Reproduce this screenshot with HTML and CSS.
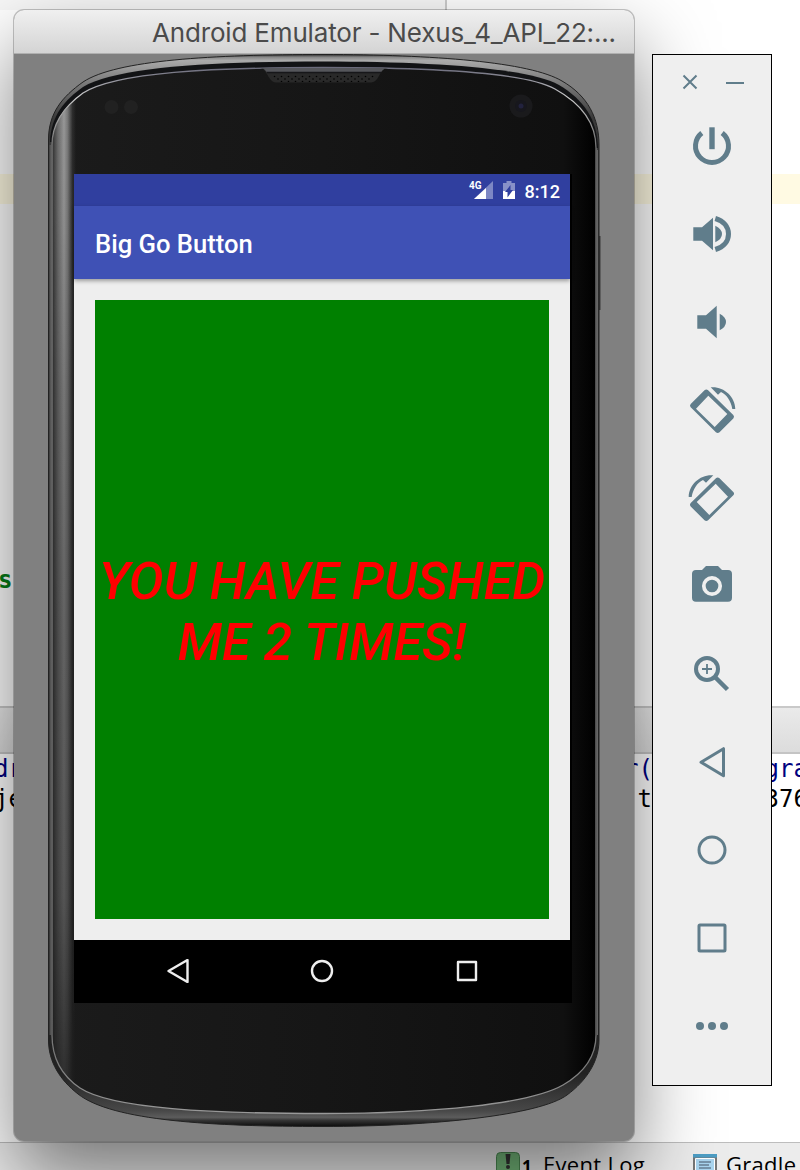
FILE: index.html
```html
<!DOCTYPE html>
<html lang="en">
<head>
<meta charset="utf-8">
<title>Android Emulator</title>
<link rel="stylesheet" href="styles.css">
</head>
<body>
<div class="desktop">
  <div class="ide">
    <div class="ide-top"></div>
    <div class="ide-editor"><div class="caret-line"></div><span class="code keyword">s</span></div>
    <div class="ide-divider"></div>
    <div class="ide-console">
      <div class="log-row blue"><span>dr</span><span>r(</span><span>gra</span></div>
      <div class="log-row"><span>je</span><span class="log-t">t</span><span>376</span></div>
    </div>
    <div class="ide-status">
      <svg class="event-icon" viewBox="0 0 24 24"><rect x=".5" y=".5" width="23" height="22" rx="4" fill="#74b87a" stroke="#4c8a53"/><path d="M9.500 2h5l-1 10h-3z" fill="#333"/><circle cx="12" cy="15" r="2" fill="#333"/></svg>
      <span class="count">1</span>
      <span class="status-label">Event Log</span>
      <svg class="gradle-icon" viewBox="0 0 24 24"><path fill="#777" d="M0 0h24v24H0z"/><path fill="#a9d4ee" stroke="#fff" d="M2.500 4.500h19V25h-19z"/><path fill="#4c9dc4" d="M0 0h24v3.500H0z"/><path d="M6 8h12M6 11h10M6 14h12M6 17h8" stroke="#456" /></svg>
      <span class="status-label">Gradle</span>
    </div>
  </div>

  <div class="window">
    <div class="titlebar"><span>Android Emulator - Nexus_4_API_22:...</span></div>
    <div class="stage">
      <svg class="phone" viewBox="14 54 620 1087">
        <defs>
          <linearGradient id="rim" x1="0" y1="54" x2="0" y2="1127" gradientUnits="userSpaceOnUse">
            <stop offset="0" stop-color="#222"/><stop offset=".003" stop-color="#888"/><stop offset=".006" stop-color="#aaa"/><stop offset=".02" stop-color="#888"/><stop offset=".06" stop-color="#3a3a3a"/><stop offset=".95" stop-color="#222"/><stop offset=".985" stop-color="#484848"/><stop offset=".991" stop-color="#5c5c5c"/><stop offset=".994" stop-color="#333"/><stop offset="1" stop-color="#080808"/>
          </linearGradient>
          <linearGradient id="face" x1="52" y1="0" x2="596" y2="0" gradientUnits="userSpaceOnUse">
            <stop offset="0" stop-color="#1b1b1b"/><stop offset=".5" stop-color="#161616"/><stop offset=".94" stop-color="#101010"/><stop offset="1" stop-color="#000"/>
          </linearGradient>
          <linearGradient id="sheen" x1="52" y1="0" x2="76" y2="0" gradientUnits="userSpaceOnUse">
            <stop offset="0" stop-color="#999" stop-opacity=".15"/><stop offset=".25" stop-color="#999" stop-opacity=".65"/><stop offset=".5" stop-color="#999"/><stop offset=".65" stop-color="#999" stop-opacity=".75"/><stop offset=".85" stop-color="#999" stop-opacity=".15"/><stop offset="1" stop-color="#999" stop-opacity="0"/>
          </linearGradient>
          <linearGradient id="fade" x1="0" y1="90" x2="0" y2="1100" gradientUnits="userSpaceOnUse">
            <stop offset="0" stop-color="#fff"/><stop offset=".12" stop-color="#eee"/><stop offset=".3" stop-color="#bbb"/><stop offset=".5" stop-color="#999"/><stop offset=".8" stop-color="#777"/><stop offset="1" stop-color="#222"/>
          </linearGradient>
          <linearGradient id="edge" x1="0" y1="66" x2="0" y2="1114" gradientUnits="userSpaceOnUse">
            <stop offset="0" stop-color="#667"/><stop offset=".03" stop-color="#ccc"/><stop offset=".07" stop-color="#777"/><stop offset=".95" stop-color="#777"/><stop offset="1" stop-color="#999"/>
          </linearGradient>
          <pattern id="mesh" width="7" height="5" patternUnits="userSpaceOnUse"><circle cx="1.500" cy="1.500" r=".8"/><circle cx="5" cy="4" r=".8"/></pattern>
          <mask id="fall"><path fill="url(#fade)" d="M0 0h700v1170H0z"/></mask>
          <clipPath id="inside"><use href="#glass"/></clipPath>
        </defs>
        <path d="M598.500 236h2v74h-2z" fill="#3a3a3a"/>
        <path fill="url(#rim)" stroke="#222" d="M48.500 140C48.500 113 62 97 83 82C116 60 213 54.500 323 54.500C433 54.500 530 62 562 81C588 96 599 118 599 145V1040C599 1062 586 1081 567 1095C540 1115 433 1126.500 323 1126.500C213 1126.500 112 1121 78 1094C60 1080 48.500 1062 48.500 1040Z"/>
        <path fill="#121315" d="M50 142C51 115 65 100 83 87C116 67 213 61.500 323 61.500C433 61.500 527 68 559 85C584 100 597 119 598 148Z"/>
        <path id="glass" fill="url(#face)" stroke="url(#edge)" stroke-width="1.300" d="M52 145C52 123 65 106 83 93C116 72 213 67.500 323 67.500C433 67.500 525 72 555 89C582 104 596 124 596 148V1035C596 1058 582 1074 563 1085C530 1104 433 1113.500 323 1113.500C213 1113.500 112 1109 80 1088C62 1076 52 1058 52 1035Z"/>
        <g clip-path="url(#inside)"><path fill="url(#sheen)" mask="url(#fall)" d="M52 90h26v1010H52z"/></g>
        <path fill="none" stroke="#666" stroke-width="1" d="M50.200 145V1035M597.500 150V1035"/>
        <path d="M260 68c7 0 8 14 16 14.500h95c9-.5 8-14.500 17-14.500z" fill="#292929"/>
        <path d="M260 68c5 0 6 4 8 5h112c2-2 4-5 8-5z" fill="#55565b"/>
        <path d="M267 72.500h114" stroke="#17171a" stroke-width="1.500"/>
        <path d="M272 75h104l-6 7h-92z" fill="url(#mesh)"/>
        <circle cx="111.500" cy="107" r="7" fill="#212121"/><circle cx="131" cy="107" r="7" fill="#212121"/>
        <circle cx="521" cy="106" r="11.500" fill="#1a1a1c"/><circle cx="521" cy="106" r="6" fill="#17171d"/><circle cx="521" cy="106" r="2.500" fill="#22223e"/>
      </svg>
      <div class="screen">
        <div class="app">
          <div class="statusbar">
            <svg class="signal" viewBox="0 0 24 20"><path fill="#7d87c4" d="M24 1v18H5z"/><path fill="#fff" d="M17 8v11H5z"/><text x="0" y="8.500" class="network">4G</text></svg>
            <svg class="battery" viewBox="0 0 12 20"><path fill="#8891c8" d="M3.500 1h5v2H12v16H0V3h3.500z"/><path fill="#fff" d="M0 11h12v8H0z"/><path fill="#303f9f" d="M7.500 5v5h2.500L4.500 17.500V12H2z"/></svg>
            <span>8:12</span>
          </div>
          <div class="appbar">Big Go Button</div>
          <div class="content"><div class="go-button">YOU HAVE PUSHED<br>ME 2 TIMES!</div></div>
        </div>
        <div class="navbar">
          <svg viewBox="-12 -12 24 24"><path d="M-9.500 0 9.500-11V11Z"/></svg>
          <svg viewBox="-12 -12 24 24"><circle r="10"/></svg>
          <svg viewBox="-12 -12 24 24"><path d="M-9-9H9V9H-9Z"/></svg>
        </div>
      </div>
    </div>
  </div>

  <div class="tools">
    <div class="tool-head">
      <svg viewBox="-8 -8 16 16"><path class="line thin" d="M-6.500-6.500 6.500 6.500M6.500-6.500-6.500 6.500"/></svg>
      <svg class="minimize" viewBox="-9 -8 18 16"><path class="line thin" d="M-9 1H9"/></svg>
    </div>
    <div class="tool"><svg viewBox="-25 -25 50 50"><path class="line" stroke-width="5" d="M-10.200-13A16.500 16.500 0 1 0 10.200-13"/><path d="M-2.700-18.700h5.400V3.200h-5.400z"/></svg></div>
    <div class="tool"><svg viewBox="-25 -25 50 50"><path d="M-18.700-6.700h8.700L1-16.300V16.300L-10 6.700h-8.700zM3.300-8.300Q10-5 10 0T3.300 8.300z"/><path class="line" stroke-width="5" d="M3.300-15.500C12-13 16.500-7 16.500 0S12 13 3.300 15.500"/></svg></div>
    <div class="tool"><svg viewBox="-25 -25 50 50"><path d="M-14.700-6.700h8.700L4.700-16.300V16.300L-6 6.700h-8.700zM7.700-8.300Q14-5 14 0T7.700 8.300z"/></svg></div>
    <div class="tool"><svg viewBox="-25 -25 50 50"><path id="rotate" fill-rule="evenodd" d="M-21.300-6-7.500-19.800Q-5.700-21.300-3.900-19.800L21.300 5Q22.800 6.800 21.300 8.500L7.500 22.200Q5.700 23.700 3.900 22.200L-21.300-2.700Q-22.800-4.300-21.300-6ZM-3.700-14.300-16-1.300 2.700 17 15.300 4ZM-1.300-22.700C11-24 23-14 23.300-1H20.300C19-9 15-15 9-18L6-15.300Z"/></svg></div>
    <div class="tool"><svg viewBox="-25 -25 50 50"><use href="#rotate" transform="scale(-1 1)"/></svg></div>
    <div class="tool"><svg viewBox="-25 -25 50 50"><path d="M-6-20H6l4 4h6q4 0 4 4V11.700q0 4-4 4H-16q-4 0-4-4V-12q0-4 4-4h6z"/><circle r="8.200" fill="none" stroke="#efefef" stroke-width="3.700"/></svg></div>
    <div class="tool"><svg viewBox="-25 -25 50 50"><circle class="line" cx="-5" cy="-5" r="11" stroke-width="4"/><path class="line" stroke-width="1.800" d="M-10-5H0M-5-10V0"/><path class="line" stroke-width="4.500" d="M3.500 3.500 15.500 15.500"/></svg></div>
    <div class="tool"><svg viewBox="-25 -25 50 50"><path class="line" stroke-width="3" stroke-linejoin="round" d="M-11 .2 11.500-13.300V13.700Z"/></svg></div>
    <div class="tool"><svg viewBox="-25 -25 50 50"><circle class="line" r="13" stroke-width="3"/></svg></div>
    <div class="tool"><svg viewBox="-25 -25 50 50"><rect class="line" x="-13" y="-13" width="26" height="26" rx="1" stroke-width="3"/></svg></div>
    <div class="tool"><svg viewBox="-25 -25 50 50"><circle cx="-12" r="4"/><circle r="4"/><circle cx="12" r="4"/></svg></div>
  </div>
</div>
</body>
</html>
```
FILE: styles.css
```css
body { margin: 0; }
svg { display: block; flex: none; }
.desktop { position: relative; width: 800px; height: 1170px; overflow: hidden; background: #fff; }

/* IDE behind the emulator */
.ide { height: 1170px; overflow: hidden; }
.ide-top { width: 445px; height: 10px; background: #f8f8f8; border-right: 2px solid #ccc; }
.ide-editor { height: 696px; box-sizing: border-box; padding-top: 164px; }
.caret-line { height: 30px; background: #fffae3; }
.code, .log-row { font: 24px/30px "DejaVu Sans Mono", monospace; }
.keyword { display: block; margin: 361px 0 0 -2px; color: #067d17; font-weight: bold; }
.ide-divider { height: 44px; border-top: 2px solid #c9c9c9; border-bottom: 2px solid #c4c4c4; background: linear-gradient(#eaeaea, #dcdcdc); }
.ide-console { height: 388px; }
.log-row { display: grid; grid-template-columns: 630px 140.500px 60px; height: 30px; margin-left: -6px; white-space: pre; }
.log-t { padding-left: 13.500px; }
.blue { color: #000080; }
.ide-status { display: flex; align-items: flex-start; height: 27px; border-top: 1px solid #bdbdbd; background: #ececec; padding-left: 496px; }
.event-icon { width: 24px; height: 24px; margin-top: 9px; }
.count { flex: none; font: bold 17px/20px "Open Sans", sans-serif; margin: 14px 10px 0 2px; width: 11px; }
.status-label { flex: none; font: 22px/30px "Open Sans", sans-serif; margin-top: 6px; width: 150px; letter-spacing: .3px; }
.gradle-icon { width: 24px; height: 24px; margin: 11px 9px 0 0; }

/* Emulator window */
.window { position: absolute; left: 14px; top: 10px; width: 620px; height: 1131px; border-radius: 10px; background: #808080; box-shadow: 0 0 0 1px rgba(0,0,0,.22), 0 36px 80px rgba(0,0,0,.5); overflow: hidden; }
.titlebar { height: 43px; border-bottom: 1px solid #b0b0b0; background: linear-gradient(#f0f0f0, #d4d4d4); color: #4b4b4b; font: 26px/46px Inter, sans-serif; padding-left: 138px; white-space: nowrap; letter-spacing: -.17px; }
.stage { position: relative; height: 1087px; padding: 120px 0 0 60px; box-sizing: border-box; }
.phone { position: absolute; left: 0; top: 0; width: 620px; height: 1087px; }
.screen { position: relative; width: 498px; height: 829px; background: #000; font-family: Roboto, sans-serif; }
.app { width: 496px; height: 766px; display: flex; flex-direction: column; background: #eee; }
.statusbar { height: 32px; background: #303f9f; color: #fff; display: flex; justify-content: flex-end; align-items: center; box-sizing: border-box; padding-right: 10px; font-size: 18.100px; font-weight: 500; }
.statusbar span { margin-top: 2px; }
.signal { width: 24px; height: 20px; margin: 0 10px 0 0; overflow: visible; }
.network { font: bold 10px Roboto, sans-serif; fill: #fff; }
.battery { width: 12px; height: 20px; margin-right: 9px; }
.appbar { height: 73px; background: #3f51b5; color: #fff; font-size: 25.600px; font-weight: 500; line-height: 76px; padding-left: 21px; box-shadow: 0 2px 4px rgba(0,0,0,.35); }
.content { flex: 1; padding: 21px; }
.go-button { height: 619px; box-sizing: border-box; padding-top: 4px; background: #008000; color: #f00; display: flex; align-items: center; justify-content: center; text-align: center; font-size: 52.200px; line-height: 61px; font-weight: 500; font-style: italic; white-space: nowrap; }
.navbar { height: 63px; box-sizing: border-box; padding: 0 2px 1px 0; display: flex; align-items: center; justify-content: center; gap: 120.500px; }
.navbar svg { width: 24px; height: 24px; fill: none; stroke: #eee; stroke-width: 2.400; stroke-linejoin: round; }

/* Emulator side panel */
.tools { position: absolute; left: 652px; top: 54px; width: 118px; height: 1030px; border: 1px solid #000; background: #efefef; fill: #607d8b; }
.tool-head { height: 47px; display: flex; align-items: center; gap: 28px; padding-left: 29px; box-sizing: border-box; padding-top: 7px; }
.tool-head svg { width: 16px; height: 16px; }
.tool-head .minimize { width: 18px; }
.tool { height: 88px; display: flex; align-items: center; justify-content: center; }
.tool svg { width: 50px; height: 50px; }
.line { fill: none; stroke: #607d8b; }
.thin { stroke-width: 2; }
```
